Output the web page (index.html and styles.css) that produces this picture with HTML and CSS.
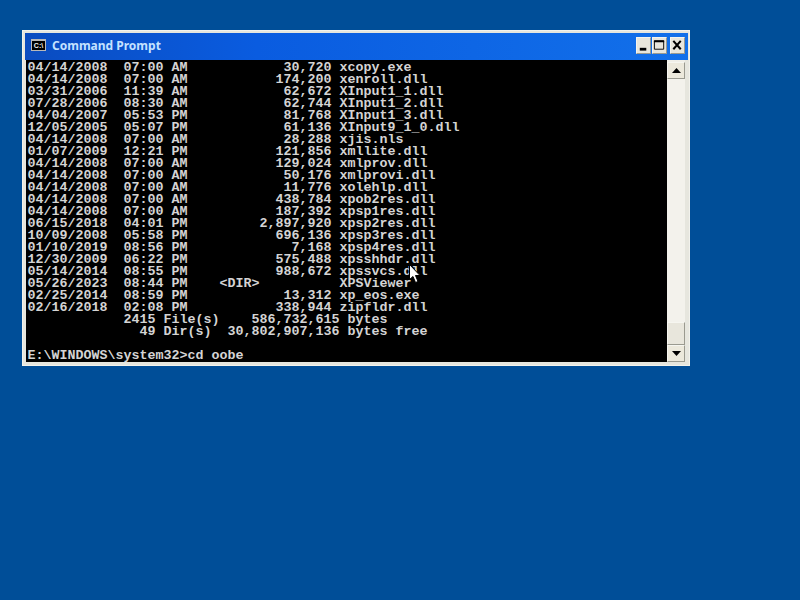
FILE: index.html
```html
<!DOCTYPE html>
<html lang="en">
<head>
<meta charset="utf-8">
<title>Command Prompt</title>
<link rel="stylesheet" href="styles.css">
</head>
<body>
<div class="window">
  <div class="titlebar">
    <span class="appicon">C:\</span>
    <span class="title">Command Prompt</span>
    <div class="controls">
      <button class="ctl"><svg width="14" height="15" viewBox="0 0 14 15"><rect x="3" y="10" width="7" height="3" fill="#000"/></svg></button>
      <button class="ctl"><svg width="14" height="15" viewBox="0 0 14 15"><path d="M1.500 2.500h10v9h-10z" fill="none" stroke="#000"/><rect x="1" y="2" width="11" height="2" fill="#000"/></svg></button>
      <button class="ctl close"><svg width="14" height="15" viewBox="0 0 14 15"><path d="M2.500 2.500l8 9M10.500 2.500l-8 9" stroke="#000" stroke-width="2.200" fill="none"/></svg></button>
    </div>
  </div>
  <div class="client">
<pre class="console">04/14/2008  07:00 AM            30,720 xcopy.exe
04/14/2008  07:00 AM           174,200 xenroll.dll
03/31/2006  11:39 AM            62,672 XInput1_1.dll
07/28/2006  08:30 AM            62,744 XInput1_2.dll
04/04/2007  05:53 PM            81,768 XInput1_3.dll
12/05/2005  05:07 PM            61,136 XInput9_1_0.dll
04/14/2008  07:00 AM            28,288 xjis.nls
01/07/2009  12:21 PM           121,856 xmllite.dll
04/14/2008  07:00 AM           129,024 xmlprov.dll
04/14/2008  07:00 AM            50,176 xmlprovi.dll
04/14/2008  07:00 AM            11,776 xolehlp.dll
04/14/2008  07:00 AM           438,784 xpob2res.dll
04/14/2008  07:00 AM           187,392 xpsp1res.dll
06/15/2018  04:01 PM         2,897,920 xpsp2res.dll
10/09/2008  05:58 PM           696,136 xpsp3res.dll
01/10/2019  08:56 PM             7,168 xpsp4res.dll
12/30/2009  06:22 PM           575,488 xpsshhdr.dll
05/14/2014  08:55 PM           988,672 xpssvcs.dll
05/26/2023  08:44 PM    &lt;DIR&gt;          XPSViewer
02/25/2014  08:59 PM            13,312 xp_eos.exe
02/16/2018  02:08 PM           338,944 zipfldr.dll
            2415 File(s)    586,732,615 bytes
              49 Dir(s)  30,802,907,136 bytes free

E:\WINDOWS\system32&gt;cd oobe</pre>
    <div class="scrollbar">
      <button class="sbtn"><svg width="9" height="5" viewBox="0 0 9 5"><path d="M4.500 0L9 5H0z" fill="#000"/></svg></button>
      <div class="track"><div class="thumb"></div></div>
      <button class="sbtn"><svg width="9" height="5" viewBox="0 0 9 5"><path d="M0 0h9L4.500 5z" fill="#000"/></svg></button>
    </div>
  </div>
</div>
<svg class="cursor" width="12" height="20" viewBox="0 0 12 20"><path d="M0.500 0.500V15.500L4 12.500L6.500 18.500L9 17.500L6.500 11.500H11z" fill="#fff" stroke="#000" stroke-width="1"/></svg>
</body>
</html>
```
FILE: styles.css
```css
html, body {
  margin: 0;
  height: 100%;
  overflow: hidden;
  background: #004e98;
}
.window {
  position: absolute;
  left: 22px;
  top: 30px;
  width: 668px;
  height: 336px;
  box-sizing: border-box;
  background: #e6e6de;
  border: 1px solid #f2f2ec;
  display: flex;
  flex-direction: column;
  padding: 2px 4px 3px 3px;
}
.titlebar {
  height: 27px;
  box-sizing: border-box;
  padding: 0 0 3px 6px;
  display: flex;
  align-items: center;
  background: linear-gradient(90deg, #0a4cc0 0%, #0a5ce0 35%, #1270ea 100%);
  margin: 0 -3px 0 -1px;
  flex: none;
}
.appicon {
  flex: none;
  width: 13px;
  height: 9px;
  background: #000;
  border: 1px solid #b8b8b8;
  border-top-width: 2px;
  color: #f0f0f0;
  font: bold 7px/9px "Liberation Sans", Arial, sans-serif;
  text-align: center;
}
.title {
  margin-left: 6px;
  color: #c4e2ff;
  font: bold 12px "Noto Sans", "Liberation Sans", sans-serif;
  flex: 1;
}
.controls {
  display: flex;
  gap: 1px;
  margin-right: 3px;
}
.ctl {
  width: 15px;
  height: 17px;
  margin: 0;
  padding: 0;
  background: #e8e6dc;
  border: 1px solid #f4f4ee;
  border-right-color: #9a9a90;
  border-bottom-color: #9a9a90;
  display: flex;
  align-items: center;
  justify-content: center;
}
.close { margin-left: 2px; }
.client {
  flex: 1;
  display: flex;
  min-height: 0;
}
.console {
  margin: 0;
  flex: 1;
  min-width: 0;
  box-sizing: border-box;
  height: 302px;
  background: #000;
  color: #d4d4d4;
  font: bold 13.33px/12px "Liberation Mono", "DejaVu Sans Mono", monospace;
  padding: 2px 0 0 1.500px;
}
.scrollbar {
  width: 18px;
  flex: none;
  display: flex;
  flex-direction: column;
  padding-top: 2px;
  box-sizing: border-box;
  background: #f0efe8;
}
.sbtn {
  width: 18px;
  height: 17px;
  margin: 0;
  padding: 0;
  flex: none;
  background: #ece9dc;
  border: 1px solid #f6f6f0;
  border-right-color: #9a9a90;
  border-bottom-color: #9a9a90;
  display: flex;
  align-items: center;
  justify-content: center;
}
.track {
  flex: 1;
  display: flex;
  flex-direction: column;
  justify-content: flex-end;
  background: #f3f2ec;
}
.thumb {
  height: 23px;
  background: #e8e6dc;
  border: 1px solid #f6f6f0;
  border-right-color: #9a9a90;
  border-bottom-color: #9a9a90;
  box-sizing: border-box;
}
.cursor {
  position: absolute;
  left: 409px;
  top: 264px;
}
```
